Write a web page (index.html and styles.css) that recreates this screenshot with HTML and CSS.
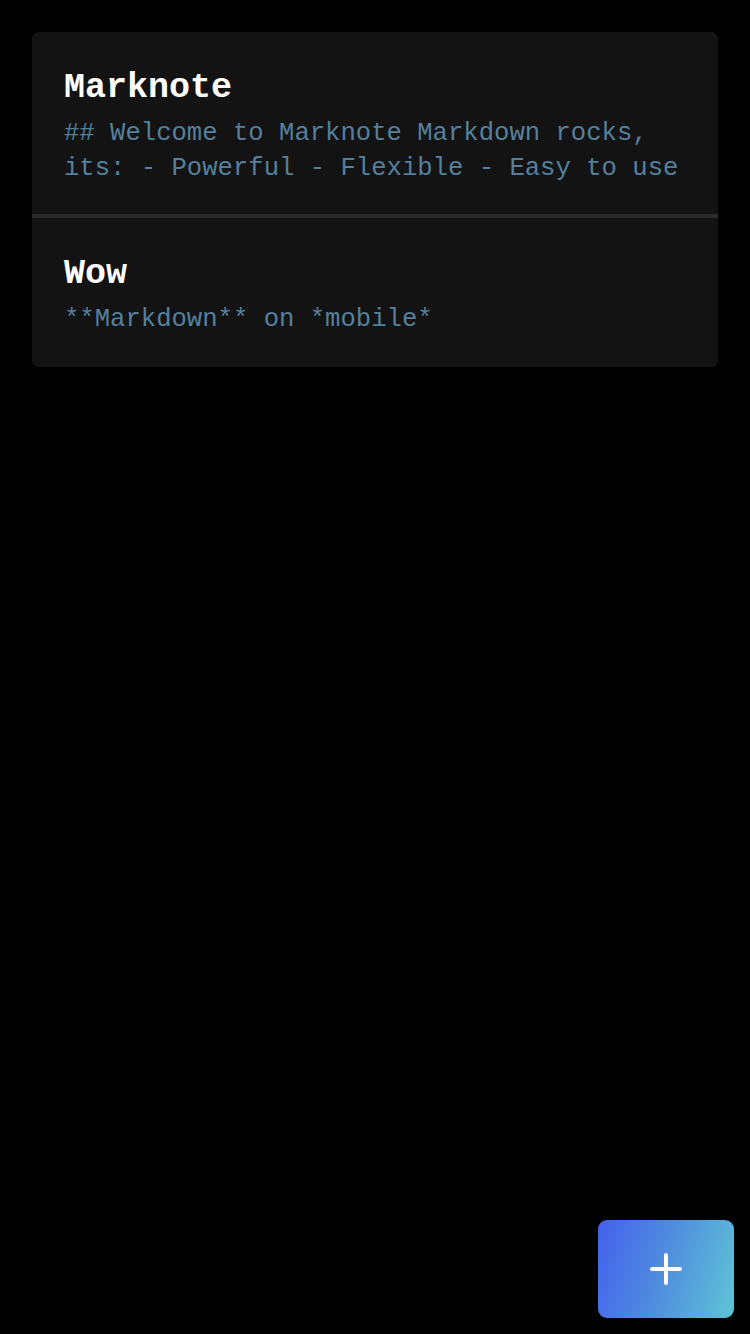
FILE: index.html
```html
<!DOCTYPE html>
<html>
<head>
<meta charset="utf-8">
<link rel="stylesheet" href="styles.css">
</head>
<body>
<main class="page">
  <section class="list">
    <article class="note">
      <h2 class="note-title">Marknote</h2>
      <p class="note-body">## Welcome to Marknote Markdown rocks, its: - Powerful - Flexible - Easy to use</p>
    </article>
    <article class="note">
      <h2 class="note-title">Wow</h2>
      <p class="note-body">**Markdown** on *mobile*</p>
    </article>
  </section>
</main>
<button class="fab" aria-label="New note">
  <svg width="34" height="34" viewBox="0 0 34 34"><path d="M17 3V31M3 17H31" stroke="#fff" stroke-width="4" stroke-linecap="round" fill="none"/></svg>
</button>
</body>
</html>
```
FILE: styles.css
```css
html, body {
  margin: 0;
  padding: 0;
  background: #000;
  height: 100%;
}
body {
  font-family: "Liberation Mono", "DejaVu Sans Mono", monospace;
}
.page {
  padding: 32px;
}
.list {
  background: #2a2a2a;
  border-radius: 8px;
  overflow: hidden;
  display: flex;
  flex-direction: column;
  gap: 4px;
}
.note {
  background: #131313;
  padding: 34px 32px 28px;
}
.note:last-child {
  padding-bottom: 30px;
}
.note-title {
  margin: 0 0 6px;
  font-size: 35px;
  line-height: 44px;
  font-weight: bold;
  color: #fff;
}
.note-body {
  margin: 0;
  font-size: 25.6px;
  line-height: 35px;
  color: #55809d;
}
.fab {
  position: fixed;
  left: 598px;
  top: 1220px;
  width: 136px;
  height: 98px;
  border: none;
  border-radius: 9px;
  background: linear-gradient(105deg, #4461ee 0%, #4f8ade 45%, #5fc4d6 100%);
  display: flex;
  align-items: center;
  justify-content: center;
  padding: 0;
}
.fab svg {
  display: block;
}
```
